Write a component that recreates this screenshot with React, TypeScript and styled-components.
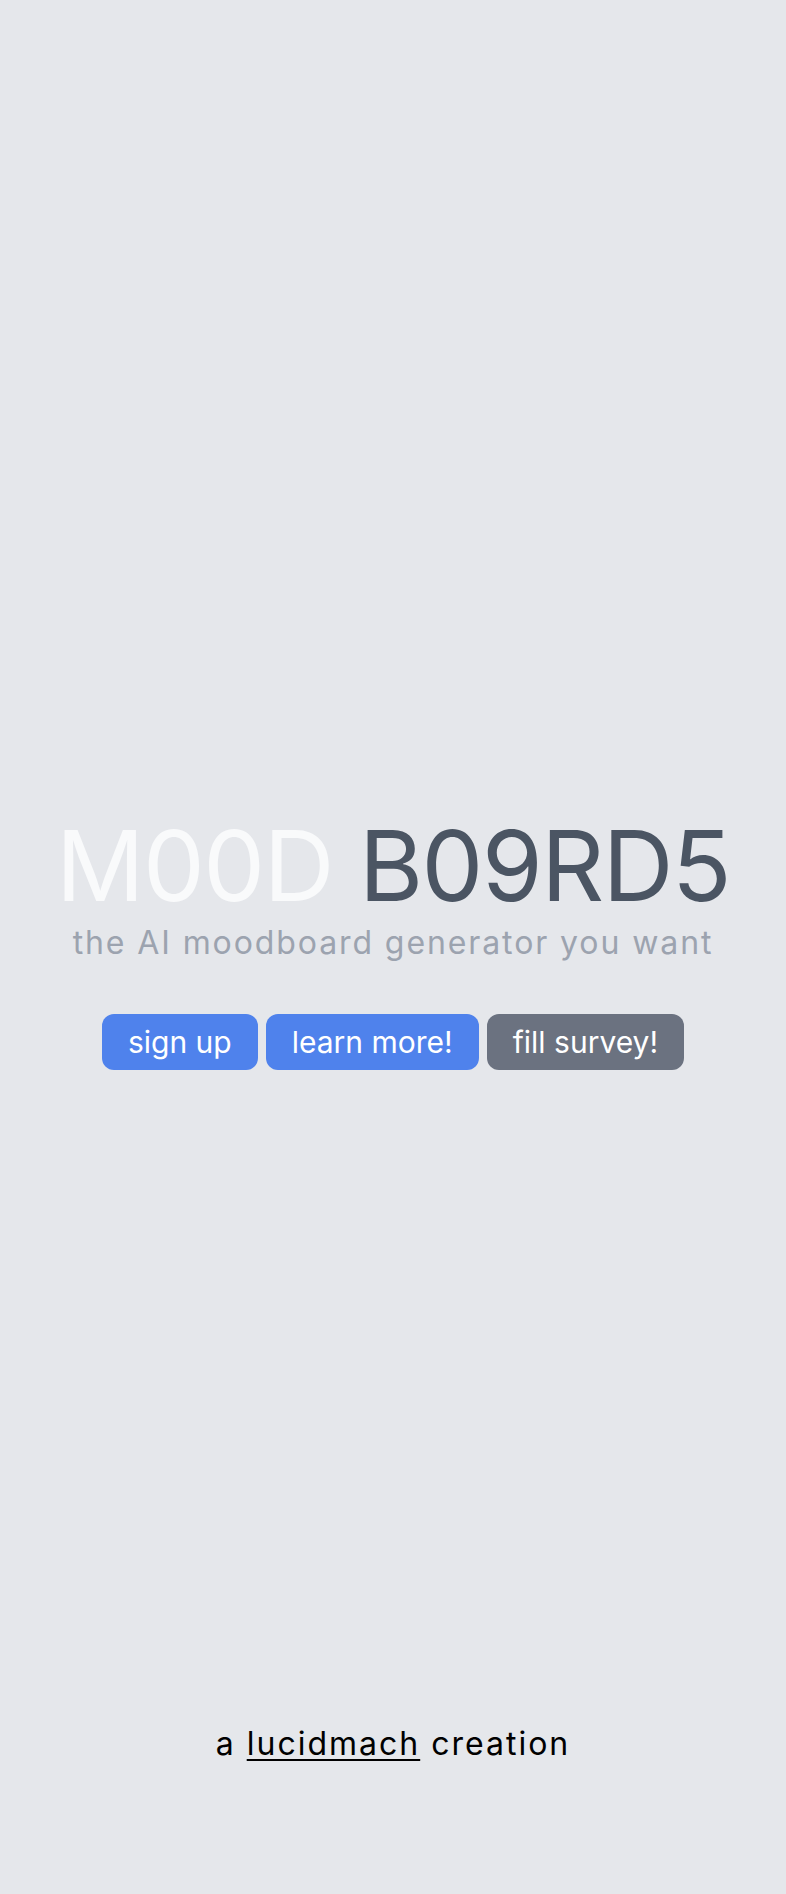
import React from 'react';
import styled, { createGlobalStyle } from 'styled-components';

const GlobalStyle = createGlobalStyle`
  html, body {
    margin: 0;
    padding: 0;
    background: #e5e7eb;
  }
  body {
    font-family: Inter, "Noto Sans", sans-serif;
  }
  * {
    box-sizing: border-box;
  }
`;

const Page = styled.div`
  min-height: 1894px;
  display: grid;
  grid-template-rows: 1fr auto 1fr;
  justify-items: center;
`;

const Hero = styled.main`
  grid-row: 2;
  display: flex;
  flex-direction: column;
  align-items: center;
  margin-bottom: 7px;
`;

const Title = styled.h1`
  margin: 0;
  font-size: 98px;
  font-weight: 400;
  line-height: 1;
  letter-spacing: -1.5px;
  white-space: nowrap;
`;

const Word = styled.span<{ $tone: 'light' | 'dark' }>`
  color: ${({ $tone }) => ($tone === 'light' ? '#f9fafb' : '#4b5563')};
`;

const Tagline = styled.p`
  margin: 9px 0 0;
  font-size: 32px;
  line-height: 38px;
  letter-spacing: 1.9px;
  color: #9ca3af;
`;

const Actions = styled.div`
  display: flex;
  gap: 8px;
  margin-top: 52px;
`;

const ActionButton = styled.a<{ $variant?: 'primary' | 'muted' }>`
  display: inline-block;
  padding: 10px 26px;
  border-radius: 12px;
  font-size: 30px;
  line-height: 36px;
  color: #ffffff;
  text-decoration: none;
  background: ${({ $variant }) => ($variant === 'muted' ? '#6b7280' : '#4f82ec')};
`;

const Footer = styled.footer`
  grid-row: 3;
  align-self: end;
  padding-bottom: 131px;
  font-size: 32px;
  line-height: 38px;
  letter-spacing: 2px;
  color: #000000;
`;

const FooterLink = styled.a`
  color: inherit;
  text-decoration: underline;
  text-decoration-thickness: 2px;
  text-underline-offset: 4px;
`;

export default function App() {
  return (
    <>
      <GlobalStyle />
      <Page>
        <Hero>
          <Title>
            <Word $tone="light">M00D</Word> <Word $tone="dark">B09RD5</Word>
          </Title>
          <Tagline>the AI moodboard generator you want</Tagline>
          <Actions>
            <ActionButton href="#">sign up</ActionButton>
            <ActionButton href="#">learn more!</ActionButton>
            <ActionButton href="#" $variant="muted">fill survey!</ActionButton>
          </Actions>
        </Hero>
        <Footer>
          a <FooterLink href="#">lucidmach</FooterLink> creation
        </Footer>
      </Page>
    </>
  );
}
